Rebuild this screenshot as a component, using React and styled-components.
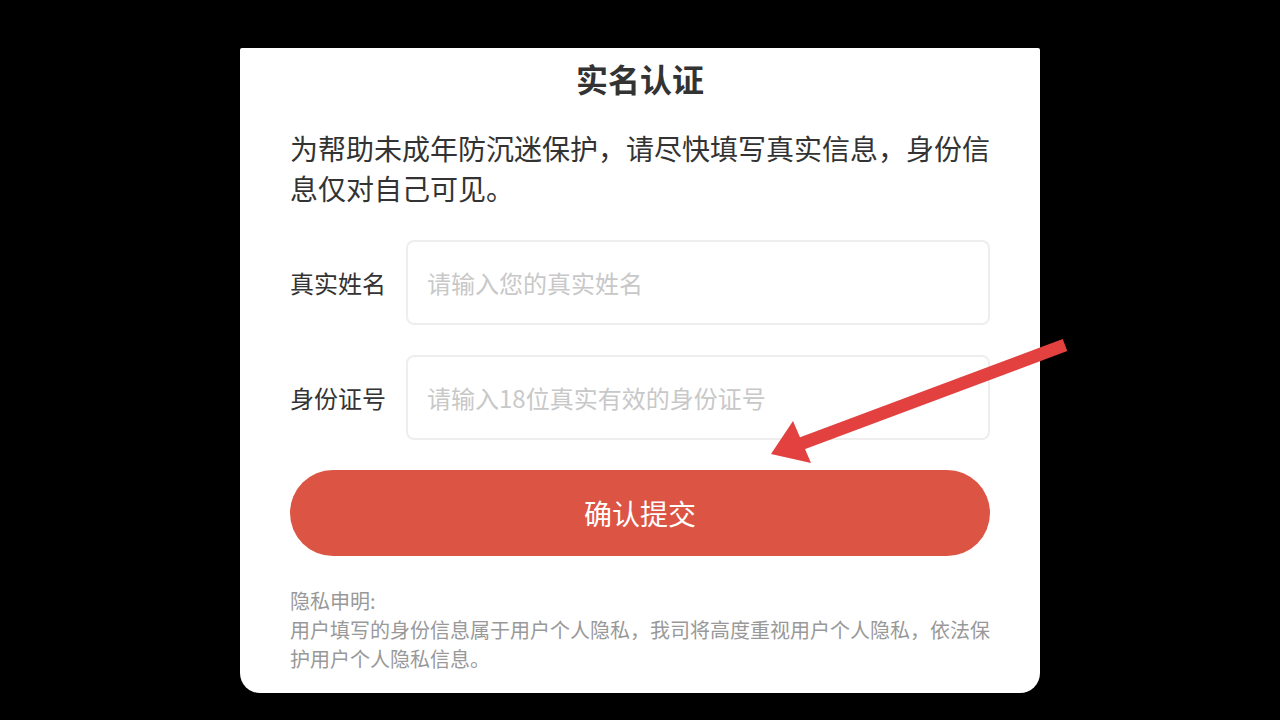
import styled, { createGlobalStyle } from "styled-components";

const GlobalStyle = createGlobalStyle`
  html, body {
    margin: 0;
    padding: 0;
    background: #000;
  }
  body {
    font-family: "Noto Sans CJK SC", "Noto Sans", sans-serif;
  }
`;

const Page = styled.div`
  position: relative;
  width: 1280px;
  height: 720px;
  background: #000;
  overflow: hidden;
  display: flex;
  justify-content: center;
  align-items: flex-start;
`;

const Card = styled.div`
  margin-top: 48px;
  width: 800px;
  box-sizing: border-box;
  background: #fff;
  border-radius: 2px 2px 20px 20px;
  padding: 10px 50px 20px;
  display: flex;
  flex-direction: column;
`;

const Title = styled.h1`
  margin: 0;
  font-size: 32px;
  line-height: 40px;
  font-weight: 700;
  color: #333;
  text-align: center;
`;

const Intro = styled.p`
  margin: 30px 0 0;
  font-size: 28px;
  line-height: 40px;
  color: #333;
`;

const Form = styled.form`
  margin-top: 32px;
  display: flex;
  flex-direction: column;
  gap: 30px;
`;

const Row = styled.label`
  display: flex;
  align-items: center;
  gap: 20px;
`;

const Label = styled.span`
  width: 96px;
  flex-shrink: 0;
  font-size: 24px;
  color: #333;
  white-space: nowrap;
`;

const Input = styled.input`
  flex: 1;
  height: 85px;
  box-sizing: border-box;
  border: 2px solid #eeeeee;
  border-radius: 8px;
  padding: 0 19px;
  font-family: inherit;
  font-size: 24px;
  color: #333;
  outline: none;
  &::placeholder {
    color: #c8c8c8;
  }
`;

const Submit = styled.button`
  height: 86px;
  border: none;
  border-radius: 43px;
  background: #dc5444;
  color: #fff;
  font-family: inherit;
  font-size: 28px;
  cursor: pointer;
`;

const Notice = styled.div`
  margin-top: 30px;
  font-size: 20px;
  line-height: 29px;
  color: #999;
`;

const Arrow = styled.svg`
  position: absolute;
  left: 0;
  top: 0;
  pointer-events: none;
`;

const App = () => {
  return (
    <>
      <GlobalStyle />
      <Page>
        <Card>
          <Title>实名认证</Title>
          <Intro>为帮助未成年防沉迷保护，请尽快填写真实信息，身份信息仅对自己可见。</Intro>
          <Form onSubmit={(e) => e.preventDefault()}>
            <Row>
              <Label>真实姓名</Label>
              <Input type="text" placeholder="请输入您的真实姓名" />
            </Row>
            <Row>
              <Label>身份证号</Label>
              <Input type="text" placeholder="请输入18位真实有效的身份证号" />
            </Row>
            <Submit type="submit">确认提交</Submit>
          </Form>
          <Notice>
            隐私申明:
            <br />
            用户填写的身份信息属于用户个人隐私，我司将高度重视用户个人隐私，依法保护用户个人隐私信息。
          </Notice>
        </Card>
        <Arrow width="1280" height="720" viewBox="0 0 1280 720">
          <line x1="1065" y1="345" x2="795" y2="446" stroke="#e34040" strokeWidth="13" />
          <polygon points="771,454 793,421 811,463" fill="#e34040" />
        </Arrow>
      </Page>
    </>
  );
};

export default App;
